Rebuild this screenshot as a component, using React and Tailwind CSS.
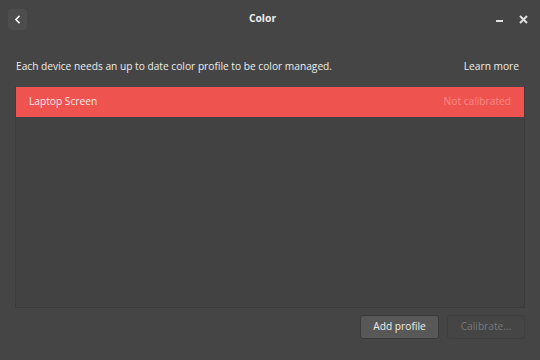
import { ChevronLeft } from 'lucide-react'

export default function App() {
  return (
    <div className="w-[540px] h-[360px] bg-[#454545] text-[#eeeeec] font-['Open_Sans',sans-serif] flex flex-col overflow-hidden">
      <div className="h-[38px] flex items-center px-2 bg-[#454545]">
        <button className="w-[19px] h-[21px] rounded-sm bg-[#4d4d4d] flex items-center justify-center">
          <ChevronLeft className="w-[13px] h-[13px] text-white" strokeWidth={3} />
        </button>
        <div className="flex-1 text-center text-[10.3px] font-bold text-[#eeeeec] pl-[2px]">Color</div>
        <div className="flex items-center gap-4 pr-1">
          <div className="w-[7px] h-[2px] bg-[#e0e0e0] mt-1" />
          <svg width="9" height="9" viewBox="0 0 9 9" className="text-[#e0e0e0]">
            <path d="M1 1 L8 8 M8 1 L1 8" stroke="currentColor" strokeWidth="2" />
          </svg>
        </div>
      </div>
      <div className="flex-1 flex flex-col px-[15px] pt-[18px] pb-[21px]">
        <div className="flex items-center justify-between text-[10.2px] h-[21px] pl-px pr-[6px]">
          <span>Each device needs an up to date color profile to be color managed.</span>
          <span>Learn more</span>
        </div>
        <div className="mt-[10px] h-[221px] bg-[#424242] border-r border-l border-b border-[#3b3b3b]">
          <div className="h-[30px] bg-[#ef5350] flex items-center justify-between px-[13px] text-[10.2px]">
            <span className="text-[#fde8e8]">Laptop Screen</span>
            <span className="text-[#f78a86]">Not calibrated</span>
          </div>
        </div>
        <div className="flex justify-end gap-2 mt-[7px]">
          <button className="w-[79px] h-[24px] rounded-[3px] bg-[#585858] border border-[#3a3a3a] text-[10.2px] text-[#eeeeec]">Add profile</button>
          <button className="w-[78px] h-[24px] rounded-[3px] bg-[#454545] border border-[#3e3e3e] text-[10.2px] text-[#787878]">Calibrate...</button>
        </div>
      </div>
    </div>
  )
}
